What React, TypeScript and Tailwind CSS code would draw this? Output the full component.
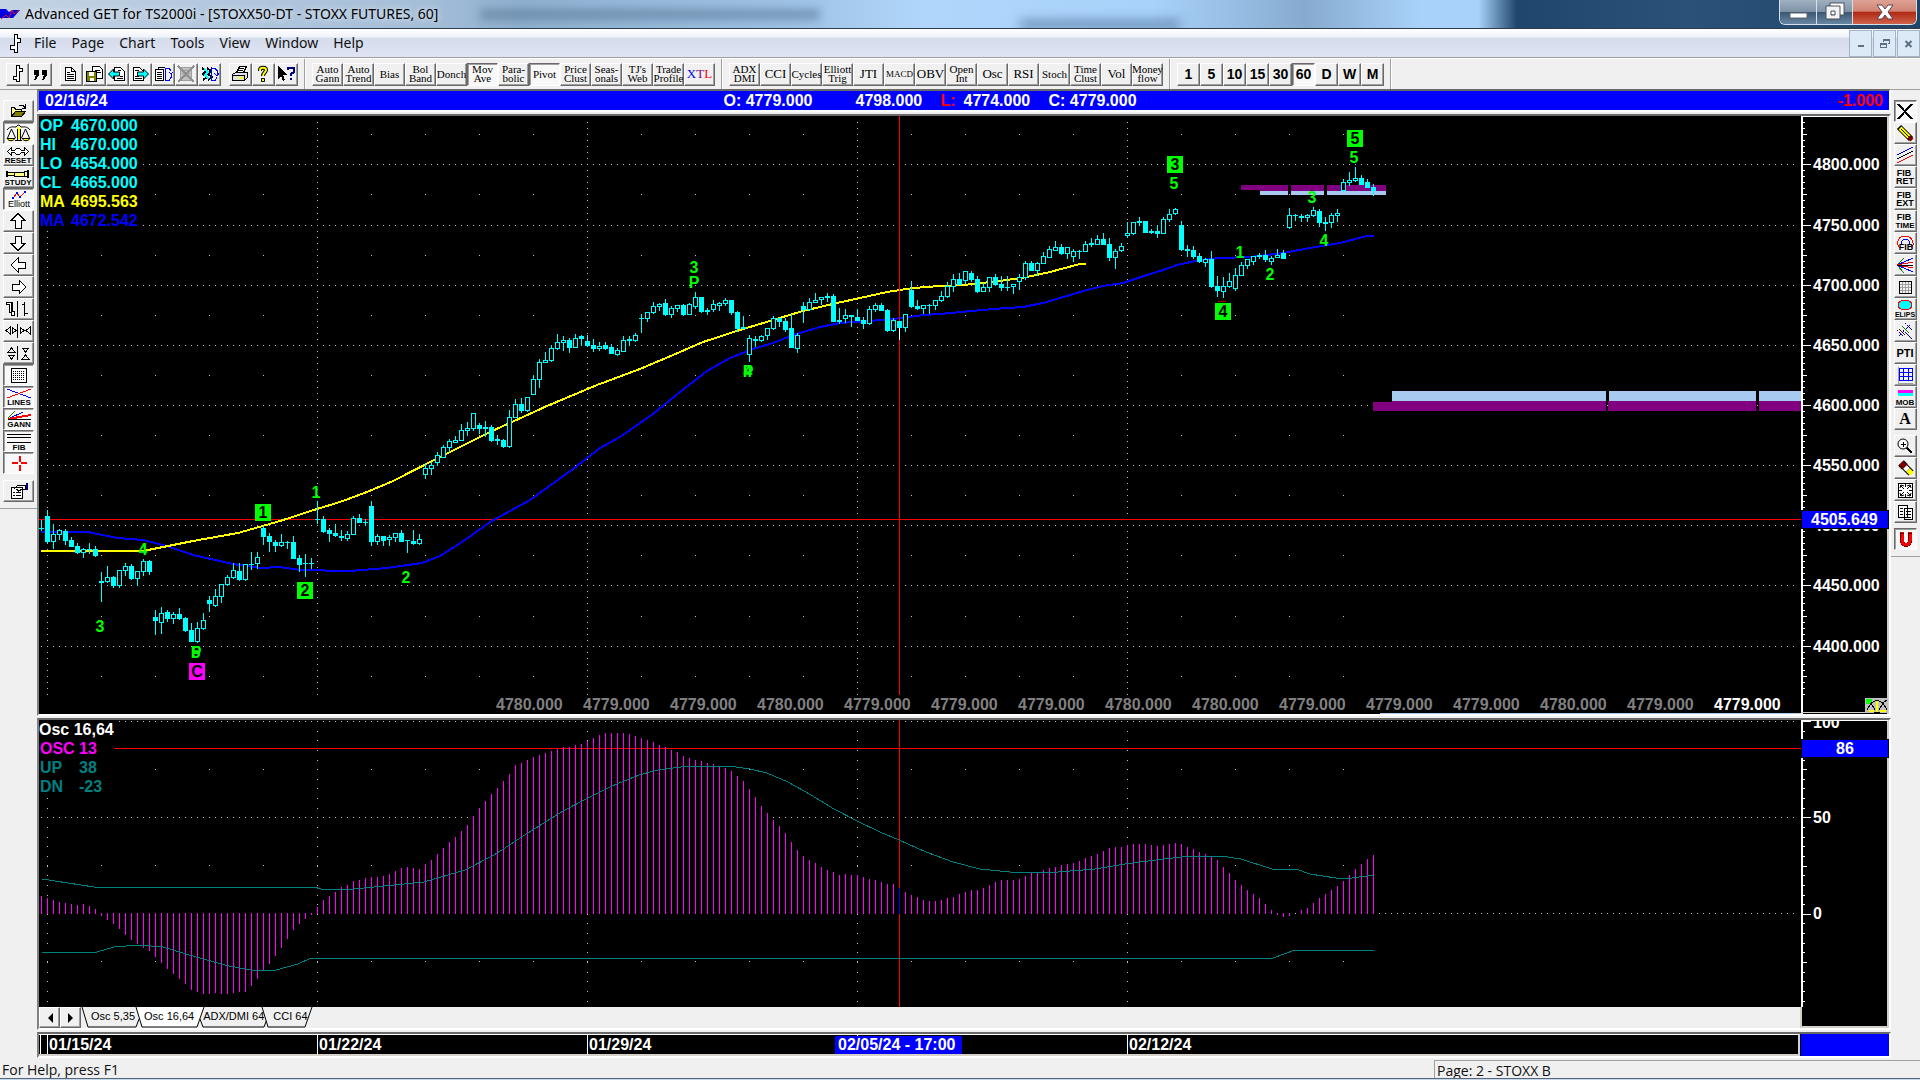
import React from "react";
import clsx from "clsx";

// [high, open, close, low] as y positions on the price pane, one entry per bar
const candles: number[][] = [
  [520,528,528,531],[510,516,542,544],[524,542,534,549],[529,535,530,540],[529,531,541,545],
  [537,540,547,547],[543,546,553,554],[548,553,549,558],[543,549,549,554],[546,549,556,557],
  [572,581,583,602],[566,582,577,583],[576,577,586,588],[570,586,570,588],[563,571,566,576],
  [564,566,579,580],[571,579,571,586],[559,572,561,576],[560,561,572,575],[610,617,621,635],
  [607,623,613,634],[610,612,619,622],[612,619,614,624],[608,614,619,620],[617,618,631,632],
  [623,630,642,642],[622,642,628,643],[613,629,620,630],[596,600,604,612],[589,606,596,607],
  [584,597,584,603],[575,585,577,586],[563,578,570,579],[563,571,580,581],[564,580,564,581],
  [552,564,564,570],[552,564,557,569],[526,528,537,545],[533,536,542,552],[540,542,546,552],
  [534,546,542,547],[541,542,542,549],[536,542,559,559],[555,558,565,572],[554,563,563,577],
  [558,563,563,569],[501,519,519,524],[516,519,532,533],[528,530,534,542],[524,533,536,537],
  [530,536,538,541],[531,539,534,541],[516,535,518,535],[514,518,523,523],[519,522,522,526],
  [501,506,542,546],[534,542,536,545],[536,536,541,546],[535,540,537,546],[533,538,533,542],
  [530,533,542,542],[540,540,541,553],[530,541,544,545],[534,544,539,545],[463,475,468,479],
  [462,469,465,475],[452,463,455,466],[445,458,447,458],[439,448,441,452],[436,443,440,443],
  [424,441,430,441],[422,431,428,436],[413,429,413,431],[423,425,429,434],[421,427,429,437],
  [425,427,441,442],[435,439,441,445],[439,440,447,448],[410,447,417,448],[399,418,404,418],
  [398,404,411,413],[397,411,397,412],[375,395,379,395],[359,380,362,388],[352,363,360,363],
  [345,361,348,362],[334,349,342,350],[336,343,340,351],[338,340,348,353],[334,348,338,348],
  [335,336,339,346],[335,341,346,347],[339,345,349,352],[342,349,346,351],[342,345,349,350],
  [344,347,354,354],[348,355,350,356],[336,352,340,352],[336,339,341,346],[333,341,335,342],
  [314,318,318,333],[312,319,312,322],[302,313,306,314],[303,307,304,311],[299,303,315,316],
  [306,315,308,318],[305,309,305,312],[304,305,315,316],[303,315,304,315],[292,307,297,309],
  [297,297,312,313],[308,310,312,315],[300,310,304,312],[302,306,303,311],[298,304,300,306],
  [300,300,313,315],[311,312,329,332],[316,327,329,329],[335,355,338,362],[336,339,341,347],
  [335,341,336,342],[328,336,328,340],[316,329,318,330],[318,318,322,327],[318,321,330,332],
  [314,328,348,348],[333,349,335,353],[302,306,310,323],[298,310,302,311],[293,303,300,303],
  [297,300,297,305],[293,296,298,302],[294,296,322,322],[308,320,322,324],[309,319,315,323],
  [315,315,317,327],[309,317,321,321],[317,320,324,329],[306,324,309,325],[303,310,305,312],
  [303,305,311,311],[309,310,331,332],[318,331,320,332],[321,321,328,340],[314,328,314,332],
  [281,290,307,308],[300,306,309,310],[305,309,305,314],[304,305,305,314],[300,306,300,310],
  [291,301,296,302],[282,297,286,298],[274,287,279,292],[273,279,285,285],[271,281,271,284],
  [271,273,280,282],[276,279,292,293],[283,292,287,292],[277,288,277,292],[274,277,285,286],
  [276,284,288,291],[276,287,287,291],[284,287,284,294],[274,282,277,290],[261,278,263,280],
  [261,263,271,271],[262,271,263,276],[252,264,256,264],[246,258,249,258],[241,251,247,251],
  [244,247,254,255],[247,254,247,259],[249,257,251,262],[250,251,251,259],[241,252,244,252],
  [238,243,245,247],[235,245,239,245],[233,239,245,245],[238,244,258,261],[249,258,251,269],
  [243,251,246,252],[222,236,233,238],[222,234,222,235],[217,221,223,226],[221,221,233,233],
  [229,231,233,234],[225,231,234,238],[217,234,219,234],[209,220,214,222],[208,214,209,215],
  [221,225,250,251],[245,249,251,257],[246,250,257,259],[253,256,262,263],[258,263,259,267],
  [251,259,287,288],[276,286,291,297],[277,292,286,298],[273,287,281,288],[268,289,275,291],
  [262,276,265,276],[259,266,259,269],[256,262,256,265],[253,255,257,259],[250,255,260,262],
  [256,262,258,265],[249,258,255,258],[250,253,259,259],[208,228,215,229],[214,215,215,221],
  [214,216,218,222],[214,218,215,222],[207,216,210,217],[209,211,223,227],[217,222,224,231],
  [213,223,215,228],[209,216,213,222],[179,191,182,192],[172,183,180,186],[167,181,178,182],
  [175,178,185,185],[179,182,188,188],[184,187,191,196],
];

const oscillator: number[] = [
  896,898,900,902,903,904,905,904,906,909,916,920,924,929,935,940,944,948,951,957,963,969,974,979,984,
  990,992,994,994,993,994,994,993,992,992,986,979,970,964,956,948,939,930,924,919,915,907,900,896,892,
  887,885,881,880,878,877,877,876,874,871,868,867,868,869,864,860,854,848,842,837,831,825,816,808,801,
  794,788,781,774,765,763,760,757,755,753,751,749,747,747,745,744,741,738,735,733,733,733,733,734,736,
  738,740,742,745,747,750,752,756,758,760,761,763,764,766,768,771,776,781,789,797,806,813,820,826,833,
  842,850,856,860,863,867,870,872,875,874,875,875,877,879,880,882,884,884,888,892,895,897,900,901,901,
  900,898,897,894,892,890,890,888,885,882,880,880,880,879,876,873,872,870,868,867,865,864,863,861,858,
  856,854,851,848,847,847,845,844,844,844,845,846,845,844,843,844,847,849,852,854,856,860,867,873,880,
  885,890,894,898,904,910,915,917,916,914,910,908,903,898,894,890,886,881,875,869,864,859,855,
];

const maYellow =
  "41,551 143,551 168,546 193,541 238,533 280,521 317,509 340,502 367,492 393,481 440,457 490,432 547,406 597,385 640,369 673,355 703,342 740,330 773,320 803,311 837,303 860,298 887,292 913,288 940,286 963,285 1000,281 1027,277 1050,272 1080,264 1086,264";
const maBlue =
  "41,532 88,532 117,538 143,540 167,546 193,555 233,564 260,568 280,567 300,570 350,571 387,568 422,563 440,556 465,540 490,522 530,500 573,469 600,448 620,437 653,414 680,392 707,371 730,358 753,349 773,343 793,335 820,327 840,323 870,321 903,318 923,315 940,314 993,309 1023,307 1043,303 1060,298 1087,290 1103,286 1123,283 1147,275 1163,270 1177,265 1200,260 1220,258 1250,257 1283,253 1310,248 1340,243 1367,236 1374,236";
const bandUp =
  "42,879 94,887 314,887 321,889 354,889 384,886 424,882 465,870 494,855 531,831 563,811 588,798 612,786 639,775 658,770 681,767 698,766 729,766 750,769 767,773 788,782 811,795 834,809 857,821 880,832 899,840 926,852 953,862 980,869 1010,872 1058,872 1095,869 1125,864 1156,860 1190,856 1221,856 1241,859 1272,869 1296,869 1310,874 1336,878 1352,878 1374,875";
const bandDown =
  "42,952 97,952 114,947 139,945 163,947 196,957 229,966 257,971 276,970 298,964 311,958 1273,958 1295,950 1374,950";

const legend = [
  ["OP", "4670.000", "#00ffff"],
  ["HI", "4670.000", "#00ffff"],
  ["LO", "4654.000", "#00ffff"],
  ["CL", "4665.000", "#00ffff"],
  ["MA", "4695.563", "#ffff00"],
  ["MA", "4672.542", "#0000ff"],
];

const closes = [4780, 4779, 4779, 4780, 4779, 4779, 4779, 4780, 4780, 4779, 4779, 4779, 4780, 4779, 4779];

const waves: [string, number, number][] = [
  ["3", 100, 632], ["4", 143, 555], ["1", 316, 498], ["2", 406, 583], ["P", 196, 658], ["5", 196, 658],
  ["3", 694, 273], ["P", 694, 288], ["P", 748, 377], ["4", 748, 377], ["1", 1240, 258], ["2", 1270, 280],
  ["3", 1312, 203], ["4", 1324, 246], ["5", 1174, 189], ["5", 1354, 163],
];

const boxedWaves: [string, number, number, string][] = [
  ["1", 255, 504, "#00ff00"],
  ["2", 297, 582, "#00ff00"],
  ["C", 189, 663, "#ff00ff"],
  ["4", 1215, 303, "#00ff00"],
  ["3", 1167, 156, "#00ff00"],
  ["5", 1347, 130, "#00ff00"],
];

const weeks = [47, 317, 587, 857, 1127];
const barX = (i: number) => 41 + i * 6;
const priceY = (step: number) => Math.round(164.4 + step * 6.015);
const oscY = (step: number) => Math.round(721 + step * 9.64);
const range = (from: number, to: number) => Array.from({ length: to - from + 1 }, (_, i) => from + i);
const dots = (xs: number[], ys: number[]) => xs.map((x) => ys.map((y) => `M${x} ${y}h1v1h-1z`).join("")).join("");

const gridX = range(0, 292).map(barX);
const midX = range(0, 24).map((k) => 47 + k * 54);
const priceDots =
  dots(gridX, range(0, 8).map((k) => priceY(k * 10))) +
  dots(weeks, range(-7, 88).map(priceY)) +
  dots(midX, range(-1, 8).map((k) => priceY(k * 10 + 5)));
const oscDots =
  dots(gridX, [721, 817, 913]) + dots(weeks, range(1, 29).map(oscY)) + dots(midX, [769, 865, 961]);

const tickEnd = (step: number) => (step % 10 === 0 ? 9 : step % 5 === 0 ? 5 : 3);

const chartText = "[font-family:'Liberation_Sans',Arial,sans-serif] text-[16px] font-bold";

const PriceChart = () => (
  <svg viewBox="39 116 1850 598" className={clsx("block w-full bg-black", chartText)} shapeRendering="crispEdges">
    <path d={priceDots} fill="#c0c0c0" />
    <rect x="39" y="116" width="102" height="113" fill="#000" />
    <g fill="#800080">
      <path d="M1241 185h47v6h-28v-1h-19z" />
      <rect x="1291" y="185" width="33" height="6" />
      <rect x="1327" y="185" width="59" height="6" />
      <path d="M1373 402h19v-1h214v10h-233z" />
      <rect x="1608" y="401" width="148" height="10" />
      <rect x="1759" y="401" width="42" height="10" />
    </g>
    <g fill="#a6caf0">
      <rect x="1260" y="191" width="28" height="4" />
      <rect x="1291" y="191" width="33" height="4" />
      <rect x="1327" y="191" width="59" height="4" />
      <rect x="1392" y="391" width="214" height="10" />
      <rect x="1609" y="391" width="147" height="10" />
      <rect x="1759" y="391" width="42" height="10" />
      <rect x="1380" y="713" width="421" height="1" />
    </g>
    <rect x="39" y="519" width="1762" height="1" fill="#f00" />
    <rect x="1218" y="301" width="8" height="1" fill="#a00000" />
    <polyline points={maBlue} fill="none" stroke="#0000ff" strokeWidth="2" />
    <polyline points={maYellow} fill="none" stroke="#ffff00" strokeWidth="2" />
    <rect x="899" y="116" width="1" height="579" fill="#f00" />
    {candles.map(([high, open, close, low], i) => {
      const x = barX(i);
      const top = Math.min(open, close);
      const size = Math.abs(close - open);
      return (
        <g key={i} fill="#00ffff">
          <rect x={x} y={high} width="1" height={Math.max(low - high, 1)} fill={i === 143 ? "#fff" : "#00ffff"} />
          {close >= open ? (
            <rect x={x - 2} y={top} width="5" height={Math.max(size, 1)} />
          ) : (
            <rect x={x - 1.5} y={top + 0.5} width="4" height={Math.max(size - 1, 1)} fill="#000" stroke="#00ffff" />
          )}
        </g>
      );
    })}
    {waves.map(([name, x, y], i) => (
      <text key={i} x={x} y={y} textAnchor="middle" fill="#00ff00">
        {name}
      </text>
    ))}
    {boxedWaves.map(([name, x, y, color]) => (
      <g key={name + x}>
        <rect x={x} y={y} width="16" height="17" fill={color} />
        <text x={x + 8} y={y + 14} textAnchor="middle">
          {name}
        </text>
      </g>
    ))}
    {legend.map(([name, value, color], i) => (
      <g key={i} fill={color}>
        <text x="40" y={131 + i * 19}>{name}</text>
        <text x="71" y={131 + i * 19}>{value}</text>
      </g>
    ))}
    {closes.map((value, i) => (
      <text key={i} x={496 + i * 87} y="710" fill={i === closes.length - 1 ? "#fff" : "#808080"}>
        {value}.000
      </text>
    ))}
    <g fill="#fff">
      <rect x="1801" y="116" width="2" height="598" />
      <rect x="1801" y="116" width="87" height="1" />
      <rect x="1801" y="712" width="87" height="1" fill="#d4d0c8" />
      <rect x="1887" y="116" width="2" height="598" fill="#d4d0c8" />
      {range(-7, 88).map((k) => (
        <rect key={k} x="1802" y={priceY(k)} width={tickEnd(k)} height="1" />
      ))}
      {range(0, 8).map((k) => (
        <text key={k} x="1813" y={priceY(k * 10) + 6}>
          {4800 - k * 50}.000
        </text>
      ))}
    </g>
    <rect x="1801" y="510" width="88" height="19" fill="#000" />
    <rect x="1802" y="511" width="86" height="17" fill="#00f" />
    <text x="1811" y="525" fill="#fff">4505.649</text>
    <g transform="translate(1865 698)">
      <rect width="23" height="15" fill="#c0c0c0" />
      <rect x="1" y="1" width="6" height="5" fill="#0f0" />
      <path d="M11 3h2v11h-2z M4 12h5v2h-5z M15 12h6v2h-6z" fill="#ff0" />
      <path d="M2 12l4-7 4 7M14 12l4-7 4 7M6 5l6-3 6 3M18 5l4-3M9 14h6" fill="none" stroke="#000" />
    </g>
  </svg>
);

const OscChart = () => (
  <svg viewBox="39 720 1850 287" className={clsx("block w-full bg-black", chartText)} shapeRendering="crispEdges">
    <path d={oscDots} fill="#c0c0c0" />
    <rect x="39" y="720" width="76" height="76" fill="#000" />
    <rect x="114" y="748" width="1687" height="1" fill="#f00" />
    <rect x="899" y="720" width="1" height="287" fill="#f00" />
    {oscillator.map((y, i) => (
      <rect
        key={i}
        x={barX(i)}
        y={Math.min(y, 913)}
        width="1"
        height={y > 914 ? y - 913 : 914 - y}
        fill={i === 143 ? "#00f" : "#f0f"}
      />
    ))}
    <g fill="none" stroke="#008080">
      <polyline points={bandUp} />
      <polyline points={bandDown} />
    </g>
    <text x="39" y="735" fill="#fff">Osc 16,64</text>
    <text x="40" y="754" fill="#f0f">OSC</text>
    <text x="79" y="754" fill="#f0f">13</text>
    <text x="40" y="773" fill="#008080">UP</text>
    <text x="79" y="773" fill="#008080">38</text>
    <text x="40" y="792" fill="#008080">DN</text>
    <text x="79" y="792" fill="#008080">-23</text>
    <g fill="#fff">
      <rect x="1801" y="720" width="2" height="287" />
      <rect x="1887" y="720" width="2" height="287" fill="#d4d0c8" />
      {range(0, 29).map((k) => (
        <rect key={k} x="1802" y={oscY(k)} width={tickEnd(k)} height="1" />
      ))}
      <text x="1813" y="728">100</text>
      <rect x="1801" y="720" width="87" height="1" />
      <text x="1813" y="823">50</text>
      <text x="1813" y="919">0</text>
    </g>
    <rect x="1801" y="739" width="88" height="19" fill="#000" />
    <rect x="1802" y="740" width="86" height="17" fill="#00f" />
    <text x="1845" y="754" textAnchor="middle" fill="#fff">86</text>
  </svg>
);

const TimeAxis = () => (
  <svg viewBox="39 1034 1850 22" className={clsx("block w-full bg-black", chartText)} shapeRendering="crispEdges">
    <g fill="#fff">
      <rect x="39" y="1034" width="1761" height="1" />
      <rect x="39" y="1054" width="1761" height="2" fill="#d4d0c8" />
      <rect x="40" y="1034" width="1" height="20" />
      <rect x="1798" y="1034" width="2" height="20" fill="#d4d0c8" />
      {weeks.map((x) => (
        <rect key={x} x={x} y="1035" width="1" height="19" />
      ))}
      <text x="49" y="1050">01/15/24</text>
      <text x="319" y="1050">01/22/24</text>
      <text x="589" y="1050">01/29/24</text>
      <rect x="835" y="1036" width="127" height="18" fill="#00f" />
      <text x="838" y="1050">02/05/24 - 17:00</text>
      <text x="1129" y="1050">02/12/24</text>
    </g>
    <rect x="1801" y="1034" width="88" height="22" fill="#00f" />
  </svg>
);

type ToolProps = {
  label: string;
  pressed?: boolean;
  className?: string;
  children: React.ReactNode;
};

const Tool = ({ label, pressed, className, children }: ToolProps) => (
  <button
    type="button"
    aria-label={label}
    aria-pressed={pressed}
    className={clsx(
      "flex shrink-0 items-center justify-center border text-black",
      pressed
        ? "border-t-[#696969] border-l-[#696969] border-r-white border-b-white bg-[#f8f8f8] shadow-[inset_1px_1px_0_#a0a0a0]"
        : "border-t-white border-l-white border-r-[#696969] border-b-[#696969] bg-[#f0f0f0] shadow-[inset_-1px_-1px_0_#a0a0a0]",
      className
    )}
  >
    {children}
  </button>
);

const iconFont = "[font-family:'Liberation_Sans',Arial,sans-serif] text-[8px]";

const Art = ({ w, h, children }: { w: number; h: number; children: React.ReactNode }) => (
  <svg width={w} height={h} viewBox={`0 0 ${w} ${h}`} className={iconFont} fill="none" stroke="#000" shapeRendering="crispEdges">
    {children}
  </svg>
);

const Caption = ({ x, y, large, children }: { x: number; y: number; large?: boolean; children: string }) => (
  <text x={x} y={y} textAnchor="middle" fill="#000" stroke="none" className={large ? "text-[9px] font-bold" : "text-[8px] font-bold"}>
    {children}
  </text>
);

const page = "M4.5 3.5h6l4 4v9h-10zM10.5 3.5v4h4";
const pageLines = "M6 8.5h3M6 10.5h7M6 12.5h7M6 14.5h7";

const barGlyph = "M9.5 1.5h3v3h3v3h-3v10h-3v-2h-3v-3h3z";

const fileTools = [
  { name: "Chart", art: <path d={barGlyph} fill="#fff" /> },
  {
    name: "Quote",
    art: <path d="M4 6h5v5l-3 5H4l2-5H4zM12 6h5v5l-3 5h-2l2-5h-2z" fill="#000" stroke="none" />,
  },
];

const pageTools = [
  { name: "New page", art: <><path d={page} fill="#fff" /><path d={pageLines} /></> },
  {
    name: "Save pages",
    art: (
      <>
        <path d="M8.5 2.5h7l3 3v9h-10z" fill="#fff" />
        <path d="M11 6.5h5M12 8.5h5" />
        <path d="M2.5 7.5h10v10h-10z" fill="#808000" />
        <path d="M5 8h5v4H5zM6 14h4v3H6z" fill="#fff" stroke="none" />
      </>
    ),
  },
  {
    name: "Previous page",
    art: (
      <>
        <path d="M7.5 3.5h6l4 4v9h-10z" fill="#fff" />
        <path d="M11 6.5h3M13 12.5h3M10 14.5h6" />
        <path d="M1.5 10l5-5v3h6v4h-6v3z" fill="#0ff" shapeRendering="auto" />
      </>
    ),
  },
  {
    name: "Next page",
    art: (
      <>
        <path d="M3.5 3.5h6l4 4v9h-10z" fill="#fff" />
        <path d="M5 6.5h4M5 12.5h4M5 14.5h7" />
        <path d="M18.5 10l-5-5v3h-6v4h6v3z" fill="#0ff" shapeRendering="auto" />
      </>
    ),
  },
  {
    name: "Page loop",
    art: (
      <>
        <path d="M2.5 5.5h8v11h-8zM5.5 5V3.5h6" fill="#fff" />
        <path d="M4 8.5h5M4 10.5h5M4 12.5h5M4 14.5h5" />
        <path d="M12.5 4v13M12 4.5h4l2 2M12 16.5h4l2-3v-5M16 8l2 2 2-2" stroke="#00f" />
      </>
    ),
  },
  {
    name: "Delete page",
    art: (
      <>
        <path d="M4.5 3.5h11v13h-11z" fill="#c0c0c0" stroke="#a0a0a0" />
        <path d="M6 6.5h8M6 9.5h8M6 12.5h8" stroke="#a0a0a0" />
        <path d="M2 2l16 16M18 2L2 18" stroke="#909090" strokeWidth="2" />
      </>
    ),
  },
  {
    name: "Chart loop",
    art: (
      <>
        <path d="M3 4l4 3-3 3 4 3-4 3M8 4l4 3-3 3 4 3-4 3" strokeWidth="2" />
        <path d="M5 5l4 3-3 3 4 4" stroke="#0ff" strokeWidth="2" />
        <path d="M12.5 3v14M12 4.5h4l2 2v3M12 16.5h4l2-3M15 9l3 3 2-3" stroke="#00f" />
      </>
    ),
  },
];

const helpTools = [
  {
    name: "Print",
    art: (
      <>
        <path d="M6.5 8.5l3-6h7l-3 6z" fill="#fff" />
        <path d="M2.5 10.5l3-2h12v5l-3 3h-12z" fill="#e0e0e0" />
        <path d="M3 11.5h11M14.5 11v5M9 4.5h5M8 6.5h5" />
        <path d="M9 14h4" stroke="#ff0" strokeWidth="2" />
      </>
    ),
  },
  {
    name: "Help",
    art: (
      <g shapeRendering="auto">
        <path d="M7 7V6c0-3 6-3 6 0 0 2-3 3-3 6" strokeWidth="4" />
        <path d="M7 7V6c0-3 6-3 6 0 0 2-3 3-3 6" stroke="#ff0" strokeWidth="2" />
        <path d="M8.5 14.5h3v3h-3z" fill="#ff0" />
      </g>
    ),
  },
  {
    name: "Context help",
    art: (
      <>
        <path d="M2 2v13l3-3 2 5 2-1-2-5h4z" fill="#000" stroke="none" />
        <path d="M12 6V4h6v4l-3 2v2M14 15h2" stroke="#000080" strokeWidth="2" />
      </>
    ),
  },
];

const studyTools = [
  ["Auto", "Gann"], ["Auto", "Trend"], ["Bias"], ["Bol", "Band"], ["Donch"], ["Mov", "Ave"], ["Para-", "bolic"],
  ["Pivot"], ["Price", "Clust"], ["Seas-", "onals"], ["TJ's", "Web"], ["Trade", "Profile"], ["XTL"],
];
const indicatorTools = [
  ["ADX", "DMI"], ["CCI"], ["Cycles"], ["Elliott", "Trig"], ["JTI"], ["MACD"], ["OBV"], ["Open", "Int"],
  ["Osc"], ["RSI"], ["Stoch"], ["Time", "Clust"], ["Vol"], ["Money", "flow"],
];
const intervals = ["1", "5", "10", "15", "30", "60", "D", "W", "M"];

const wordSize = (words: string[]) => {
  if (words.length > 1) return "text-[11px] leading-[9px]";
  if (words[0].length <= 3) return "text-[13px] leading-[14px]";
  return words[0] === "MACD" ? "text-[9px] leading-[12px]" : "text-[11px] leading-[12px]";
};

const WordTool = ({ words, pressed }: { words: string[]; pressed?: boolean }) => (
  <Tool label={words.join(" ")} pressed={pressed} className="h-[23px] w-[31px]">
    <span className={clsx("flex flex-col items-center [font-family:'Liberation_Serif',serif]", wordSize(words))}>
      {words[0] === "XTL" ? (
        <span>
          <span className="text-[#00f]">X</span>
          <span className="text-[#800080]">T</span>
          <span className="text-[#f00]">L</span>
        </span>
      ) : (
        words.map((word) => <span key={word}>{word}</span>)
      )}
    </span>
  </Tool>
);

const Divider = () => <div className="h-[30px] w-[2px] shrink-0 border-l border-[#a0a0a0] bg-white" />;

const Group = ({ children }: { children: React.ReactNode }) => <div className="flex shrink-0">{children}</div>;

const ArtGroup = ({ tools }: { tools: { name: string; art: React.ReactNode }[] }) => (
  <Group>
    {tools.map(({ name, art }) => (
      <Tool key={name} label={name} className="size-[23px]">
        <Art w={21} h={20}>{art}</Art>
      </Tool>
    ))}
  </Group>
);

const TopToolbar = () => (
  <div className="flex h-[31px] items-center border-t border-white pl-[6px]">
    <ArtGroup tools={fileTools} />
    <div className="w-2" />
    <ArtGroup tools={pageTools} />
    <div className="w-2" />
    <ArtGroup tools={helpTools} />
    <div className="w-[6px]" />
    <Divider />
    <div className="w-[6px]" />
    <Group>
      {studyTools.map((words) => (
        <WordTool key={words.join()} words={words} pressed={words[0] === "Mov" || words[0] === "Pivot"} />
      ))}
    </Group>
    <div className="w-[6px]" />
    <Divider />
    <div className="w-[6px]" />
    <Group>
      {indicatorTools.map((words) => (
        <WordTool key={words.join()} words={words} />
      ))}
    </Group>
    <div className="w-[6px]" />
    <Divider />
    <div className="w-[6px]" />
    <Group>
      {intervals.map((name) => (
        <Tool key={name} label={name} pressed={name === "60"} className="size-[23px]">
          <span className="[font-family:'Liberation_Sans',Arial,sans-serif] text-[14px] font-bold">{name}</span>
        </Tool>
      ))}
    </Group>
    <div className="w-[6px]" />
    <Divider />
  </div>
);

const leftTools = [
  {
    name: "Open",
    art: (
      <>
        <path d="M7.5 15.5v-9h3l1 2h6v3" fill="#ff8" />
        <path d="M7.5 15.5l4-5h10l-4 5z" fill="#808000" />
        <path d="M15 4.5h4l2 2M21.5 3v4h-4" />
      </>
    ),
  },
  {
    name: "Scales",
    pressed: true,
    art: (
      <>
        <path d="M14.5 4v12M4 16h5M20 16h5" stroke="#ff0" strokeWidth="3" />
        <path d="M3.5 15l4-9 4 9M17.5 15l4-9 4 9M3 15.5c2 3 6 3 8 0zM18 15.5c2 3 6 3 8 0zM3 7c3-4 6-3 9-3l2-2h1l2 2c3 0 6-1 9 3M11 17.5h7" shapeRendering="auto" />
        <path d="M13.5 6v11M16.5 6v11" />
      </>
    ),
  },
  {
    name: "Reset",
    art: (
      <>
        <path d="M3.5 6.5l4-4v3h3l2-2h3l2 2h3v-3l4 4-4 4v-3h-3l-2 2h-3l-2-2h-3v3z" fill="#fff" />
        <Caption x={14} y={18}>RESET</Caption>
      </>
    ),
  },
  {
    name: "Study",
    art: (
      <>
        <path d="M3.5 5.5h7v3h-7zM10.5 5.5h10v4h-10zM20.5 4.5h4v5h-4z" fill="#ff8" />
        <path d="M3 4v6M24 3v8" strokeWidth="2" />
        <Caption x={14} y={18}>STUDY</Caption>
      </>
    ),
  },
  {
    name: "Elliott",
    pressed: true,
    art: (
      <>
        <path d="M9 9l4-5 3 4 5-5" stroke="#f00" />
        <path d="M8 8h2v2H8zM12 3h2v2h-2zM15 7h2v2h-2zM20 2h2v2h-2z" fill="#00f" stroke="none" />
        <text x="15" y="18" textAnchor="middle" fill="#000" stroke="none" className="text-[9px]">Elliott</text>
      </>
    ),
  },
  { name: "Up", art: <path d="M14 2.5l7 7h-4v8h-6v-8H7z" fill="#fff" /> },
  { name: "Down", art: <path d="M14 17.5l7-7h-4v-7h-6v7H7z" fill="#fff" /> },
  { name: "Left", art: <path d="M7 10l7-7v4h7v6h-7v4z" fill="#fff" /> },
  { name: "Right", art: <path d="M22 10l-7-7v4H8v6h7v4z" fill="#fff" /> },
  {
    name: "Bar width",
    art: (
      <>
        <path d="M2.5 3.5h5v9h3v4h-3v-3h-2v-8h-3z" fill="#fff" />
        <path d="M13.5 2v16M18 5.5h3M20.5 3v14M21 14.5h3" />
        <path d="M8.5 3v10" />
      </>
    ),
  },
  {
    name: "Horizontal zoom",
    art: <path d="M6 6v7l-4-3.5zM8 6v7l4-3.5zM13.5 3v14M16 6v7l4-3.5zM26 6v7l-4-3.5z" />,
  },
  {
    name: "Vertical zoom",
    art: <path d="M4 9h7L7.5 5zM4 12h7l-3.5 4zM13.5 3v14M18 5h7l-3.5 4zM18 16h7l-3.5-4z" />,
  },
  {
    name: "Grid",
    pressed: true,
    art: (
      <>
        <path d="M7.5 3.5h15v14h-15z" fill="#fff" />
        <path d="M9 6.5h12M9 8.5h12M9 10.5h12M9 12.5h12M9 14.5h12" strokeDasharray="1 1" />
      </>
    ),
  },
  {
    name: "Lines",
    pressed: true,
    art: (
      <>
        <path d="M3 2l24 9" stroke="#00f" />
        <path d="M3 11l24-9" stroke="#f00" />
        <Caption x={15} y={18}>LINES</Caption>
      </>
    ),
  },
  {
    name: "Gann",
    pressed: true,
    art: (
      <>
        <path d="M4 9l7-7" stroke="#080" />
        <path d="M4 10l15-7" stroke="#00f" />
        <path d="M4 10l23-4" stroke="#f00" strokeWidth="2" />
        <path d="M4 10.5h23" />
        <Caption x={15} y={18}>GANN</Caption>
      </>
    ),
  },
  {
    name: "Fib",
    pressed: true,
    art: (
      <>
        <path d="M3 3.5h24M3 6.5h24M3 11.5h24" />
        <Caption x={15} y={19}>FIB</Caption>
      </>
    ),
  },
  { name: "Crosshair", pressed: true, art: <path d="M8 10h6M17 10h6M15.5 3v6M15.5 12v6" stroke="#f00" strokeWidth="2" /> },
];

const rightTools = [
  { name: "Pointer", pressed: true, art: <path d="M3 3l14 15M17 3L3 18" strokeWidth="2" /> },
  {
    name: "Pencil",
    art: (
      <g shapeRendering="auto">
        <path d="M4 4l12 12" strokeWidth="6" />
        <path d="M5 5l9 9" stroke="#ff0" strokeWidth="4" />
        <path d="M6 6l8 8" />
        <path d="M14 14l3 3" stroke="#800000" strokeWidth="4" />
      </g>
    ),
  },
  {
    name: "Channel",
    art: (
      <>
        <path d="M2 10L18 2" stroke="#00f" />
        <path d="M2 14l16-8" />
        <path d="M2 18l16-8" stroke="#f00" />
      </>
    ),
  },
  { name: "Fib retracement", art: <><Caption x={9} y={9} large>FIB</Caption><Caption x={10} y={17} large>RET</Caption></> },
  { name: "Fib extension", art: <><Caption x={9} y={9} large>FIB</Caption><Caption x={10} y={17} large>EXT</Caption></> },
  { name: "Fib time", art: <><Caption x={9} y={9} large>FIB</Caption><Caption x={10} y={17}>TIME</Caption></> },
  {
    name: "Fib arc",
    art: (
      <>
        <path d="M5 15C1 12 2 3 10 3s10 9 6 12" stroke="#f00" />
        <path d="M6 11c0-6 9-6 9 0" stroke="#00f" />
        <Caption x={11} y={17} large>FIB</Caption>
      </>
    ),
  },
  {
    name: "Gann fan",
    art: (
      <>
        <path d="M2 10l7-7M2 10l7 8" stroke="#080" />
        <path d="M2 10l16-7M2 10l16 7" stroke="#00f" />
        <path d="M2 10l16-3M2 10l16 3" stroke="#f00" />
        <path d="M2 10.5h16" />
      </>
    ),
  },
  {
    name: "Gann box",
    art: (
      <>
        <path d="M7.5 4v12M10.5 4v12M13.5 4v12M4 7.5h12M4 10.5h12M4 13.5h12" stroke="#a0a0a0" />
        <path d="M4.5 4.5h12v12h-12z" />
      </>
    ),
  },
  {
    name: "Ellipse",
    art: (
      <>
        <ellipse cx="10" cy="6" rx="7" ry="5" fill="#0ff" stroke="#f00" />
        <text x="10" y="18" textAnchor="middle" fill="#000" stroke="none" className="text-[7px] font-bold">ELiPS</text>
      </>
    ),
  },
  {
    name: "Pitchfork",
    art: (
      <>
        <path d="M10 2l7 7M2 9l6 6M8 9l9 9" stroke="#000080" strokeDasharray="2 1" />
        <path d="M7 5l7 7" stroke="#080" />
        <path d="M4 8l6 6" stroke="#800000" />
        <path d="M4 15L15 4" stroke="#00a" strokeDasharray="1 1" />
      </>
    ),
  },
  {
    name: "PTI",
    art: <text x="10" y="14" textAnchor="middle" fill="#000" stroke="none" className="text-[11px] font-bold">PTI</text>,
  },
  {
    name: "Grid",
    art: (
      <>
        <path d="M4.5 3.5h13v12h-13zM8.5 3v13M13.5 3v13M4 7.5h14M4 11.5h14" stroke="#00f" />
        <path d="M3.5 2v16h14" stroke="#a0a0a0" />
      </>
    ),
  },
  {
    name: "MOB",
    art: (
      <>
        <path d="M3 4.5h15" stroke="#f0f" strokeWidth="3" />
        <path d="M3 7.5h15" stroke="#0ff" strokeWidth="3" />
        <Caption x={10} y={18}>MOB</Caption>
      </>
    ),
  },
  {
    name: "Text",
    art: (
      <text x="10" y="15" textAnchor="middle" fill="#000" stroke="none" className="[font-family:'Liberation_Serif',serif] text-[16px] font-bold">
        A
      </text>
    ),
  },
];

const viewTools = [
  {
    name: "Zoom",
    art: (
      <>
        <circle cx="8" cy="8" r="5" fill="#fff" shapeRendering="auto" />
        <path d="M8.5 6v5M6 8.5h5" />
        <path d="M12 12l5 5" strokeWidth="2" />
      </>
    ),
  },
  {
    name: "Erase",
    art: (
      <g shapeRendering="auto">
        <path d="M6 5l4 4" stroke="#000" strokeWidth="8" />
        <path d="M6 5l4 4" stroke="#800000" strokeWidth="6" />
        <path d="M10 9l6 6" stroke="#000" strokeWidth="7" />
        <path d="M10 9l3 3" stroke="#fff" strokeWidth="5" />
        <path d="M13 12l4 4" stroke="#ff0" strokeWidth="5" />
      </g>
    ),
  },
  {
    name: "Expand",
    art: (
      <>
        <path d="M3.5 3.5h14v14h-14z" fill="#fff" />
        <path d="M10.5 3v4M10.5 14v4M3 10.5h4M14 10.5h4" />
        <path d="M5 5l4 4M16 5l-4 4M5 16l4-4M16 16l-4-4M5 8l1-3 3 1M16 8l-1-3-3 1M5 13l1 3 3-1M16 13l-1 3-3-1" shapeRendering="auto" />
      </>
    ),
  },
  {
    name: "Copy",
    art: (
      <>
        <path d="M3.5 3.5h9v12h-9zM9.5 6.5h8v11h-8z" fill="#fff" />
        <path d="M5 7l3-1M5 10l3-1M5 13l3-1M11 10l5-1M11 13l5-1M11 16l5-1" />
      </>
    ),
  },
];

const LeftToolbar = () => (
  <aside className="w-[37px] shrink-0">
    <div className="flex flex-col border-t border-b border-[#a0a0a0] pt-[10px] pb-[6px] pl-[3px]">
      {leftTools.map(({ name, art, pressed }) => (
        <Tool key={name} label={name} pressed={pressed} className="h-[22px] w-[31px]">
          <Art w={29} h={20}>{art}</Art>
        </Tool>
      ))}
      <div className="h-[6px]" />
      <Tool label="Properties" className="h-[22px] w-[31px]">
        <Art w={29} h={20}>
          <path d="M7.5 6.5h11v11h-11z" fill="#fff" />
          <path d="M9 11.5h2M12 11.5h5M9 14.5h2M12 14.5h5M10 8l4-4h7v4h-3l-4 3M12 8l3 2" />
          <path d="M23 2v7" stroke="#000080" strokeWidth="2" />
        </Art>
      </Tool>
    </div>
  </aside>
);

const RightToolbar = () => (
  <aside className="w-[29px] shrink-0">
    <div className="flex flex-col border-t border-b border-[#a0a0a0] pt-[10px] pb-[6px] pl-[3px]">
      {rightTools.map(({ name, art, pressed }) => (
        <Tool key={name} label={name} pressed={pressed} className="h-[22px] w-[23px]">
          <Art w={21} h={20}>{art}</Art>
        </Tool>
      ))}
      <div className="h-[5px]" />
      {viewTools.map(({ name, art }) => (
        <Tool key={name} label={name} className="h-[22px] w-[23px]">
          <Art w={21} h={20}>{art}</Art>
        </Tool>
      ))}
      <div className="h-[5px]" />
      <Tool label="Magnet" pressed className="h-[22px] w-[23px]">
        <Art w={21} h={20}>
          <path d="M7 3v9c0 5 8 5 8 0V3" stroke="#600" strokeWidth="4" />
          <path d="M7 3v9c0 5 8 5 8 0V3" stroke="#f00" strokeWidth="3" />
          <path d="M5 4.5h4M13 4.5h4" stroke="#600" />
        </Art>
      </Tool>
    </div>
  </aside>
);

const TitleBar = () => (
  <header className="relative flex h-[29px] items-start overflow-hidden border-b border-[#2d3b4d] bg-[linear-gradient(90deg,#c3d3e4_0%,#b4c9df_10%,#a5bed8_22%,#8fb0d0_27%,#9fc4e6_42%,#b0d6fb_48%,#a9d2fa_60%,#86abcf_68%,#a9d2fa_74%,#a9d2fa_77%,#1f466c_79%,#2a5278_88%,#1f4468_100%)]">
    <div className="absolute top-[9px] left-[480px] h-[11px] w-[340px] bg-[#4f6d8c]/50 blur-[4px]" />
    <div className="absolute top-[20px] left-[1020px] h-[10px] w-[160px] bg-[#4f749b]/70 blur-[6px]" />
    <div className="relative flex flex-1 items-center gap-[5px]">
      <svg width="20" height="24" viewBox="0 0 20 24" className="mt-1">
        <path d="M0 5h6l3 3 4-2h7l-7 8H0z" fill="#0000e0" />
        <path d="M1 15l5-4 3 3 3-8 2 4 5-4" fill="none" stroke="#e01030" />
      </svg>
      <h1 className="[font-family:'Noto_Sans',sans-serif] text-[14px] leading-[28px] text-black [text-shadow:0_0_6px_#fff]">
        Advanced GET for TS2000i - [STOXX50-DT - STOXX FUTURES, 60]
      </h1>
    </div>
    <div className="relative mr-[3px] flex h-[25px] overflow-hidden rounded-b-md border border-t-0 border-[#d5e0ea]">
      <button type="button" aria-label="Minimize" className="flex w-[37px] items-center justify-center border-r border-[#d5e0ea] bg-[linear-gradient(#9fb0c0_0%,#7f93a8_48%,#3d5873_52%,#6886a3_100%)]">
        <svg width="20" height="20">
          <rect x="2" y="11" width="17" height="5" fill="#fff" stroke="#5a6470" />
        </svg>
      </button>
      <button type="button" aria-label="Restore" className="flex w-[36px] items-center justify-center border-r border-[#d5e0ea] bg-[linear-gradient(#9fb0c0_0%,#7f93a8_48%,#3d5873_52%,#6886a3_100%)]">
        <svg width="22" height="20" stroke="#4b5560">
          <rect x="6" y="1" width="14" height="12" fill="#fff" />
          <path d="M2 4h14v13H2zM7 9v4h4V9z" fill="#f4f4f4" fillRule="evenodd" />
        </svg>
      </button>
      <button type="button" aria-label="Close" className="flex w-[63px] items-center justify-center bg-[linear-gradient(#dda294_0%,#d18474_46%,#b02a14_52%,#d0624a_100%)]">
        <svg width="20" height="18" viewBox="0 0 20 18">
          <path d="M2 2h5l3 4 3-4h5l-5 7 5 7h-5l-3-4-3 4H2l5-7z" fill="#fff" stroke="#5a4550" />
        </svg>
      </button>
    </div>
  </header>
);

const menus = ["File", "Page", "Chart", "Tools", "View", "Window", "Help"];

const MenuBar = () => (
  <nav className="flex h-[29px] items-center border-b border-[#a0a0a0] bg-[linear-gradient(#ffffff_0%,#f0f3fa_28%,#d5dcec_34%,#dfe4f3_100%)]">
    <svg width="21" height="20" viewBox="0 0 21 20" className="ml-[3px]" shapeRendering="crispEdges">
      <path d="M11.5 1.5h3v4h3v4h-3v10h-3v-3h-4v-4h4z" fill="#fff" stroke="#000" />
    </svg>
    <div className="ml-[10px] flex flex-1 gap-[15px]">
      {menus.map((name) => (
        <button key={name} type="button" className="[font-family:'Noto_Sans',sans-serif] text-[14px] leading-[20px] text-[#111]">
          {name}
        </button>
      ))}
    </div>
    <div className="flex h-full items-center gap-px">
      <button type="button" aria-label="Minimize chart" className="flex h-[27px] w-[23px] items-center justify-center border border-[#a3b3c8] bg-[#dce9f7]">
        <svg width="13" height="13"><rect x="4" y="8" width="6" height="2" fill="#5f6f82" /></svg>
      </button>
      <button type="button" aria-label="Restore chart" className="flex h-[27px] w-[23px] items-center justify-center border border-[#a3b3c8] bg-[#dce9f7]">
        <svg width="13" height="13" fill="none" stroke="#5f6f82" shapeRendering="crispEdges">
          <path d="M5.5 5V2.5h6v4h-2M5 3.5h7M2.5 6.5h6v4h-6zM2 7.5h7" />
        </svg>
      </button>
      <button type="button" aria-label="Close chart" className="flex h-[27px] w-[23px] items-center justify-center border border-[#a3b3c8] bg-[#dce9f7]">
        <svg width="13" height="13"><path d="M3.5 4l6 6M9.5 4l-6 6" stroke="#5f6f82" strokeWidth="2" /></svg>
      </button>
    </div>
  </nav>
);

const QuoteBar = () => (
  <div className={clsx("flex h-[19px] items-center bg-[#0000ff] text-white leading-[19px]", chartText)}>
    <div className="w-[37%] pl-[6px]">02/16/24</div>
    <div className="flex">
      <span className="w-[132px]">O: 4779.000</span>
      <span className="w-[85px]">4798.000</span>
      <span className="w-[23px] text-[#f00]">L:</span>
      <span className="w-[85px]">4774.000</span>
      <span>C:&nbsp;4779.000</span>
    </div>
    <div className="flex-1 pr-[6px] text-right text-[#f00]">-1.000</div>
  </div>
);

const tabs = ["Osc 5,35", "Osc 16,64", "ADX/DMI 64", "CCI 64"];

const StudyTabs = () => (
  <div className="flex h-[21px]">
    <div className="relative flex flex-1 bg-[#f0f0f0]">
      <Tool label="Previous study" className="h-[21px] w-[21px]">
        <svg width="6" height="10"><path d="M6 0v10L1 5z" /></svg>
      </Tool>
      <Tool label="Next study" className="h-[21px] w-[21px]">
        <svg width="6" height="10"><path d="M0 0v10l5-5z" /></svg>
      </Tool>
      <svg width="240" height="21" className="absolute top-0 left-[42px]" fill="#f0f0f0" stroke="#000">
        <path d="M1 0l6 20h48l3-8" />
        <path d="M119 12l3 8h61l3-8" />
        <path d="M181 0l6 20h37l7-20" />
        <path d="M55 0l6 20h55l7-20" fill="#fff" />
      </svg>
      <div className="relative flex gap-[9px] pl-[10px]">
        {tabs.map((name) => (
          <button key={name} type="button" className="[font-family:'Liberation_Sans',Arial,sans-serif] text-[11px] leading-[14px] pb-1 text-black">
            {name}
          </button>
        ))}
      </div>
    </div>
    <div className="w-[89px] border-r-2 border-b-2 border-l-2 border-[#d4d0c8] bg-black" />
  </div>
);

const Pane = ({ children }: { children: React.ReactNode }) => (
  <section className="border-t-2 border-r-2 border-b-2 border-l-2 border-t-[#696969] border-r-white border-b-white border-l-[#808080]">
    {children}
  </section>
);

const App = () => (
  <div className="flex min-h-screen flex-col bg-[#f0f0f0]">
    <TitleBar />
    <MenuBar />
    <TopToolbar />
    <main className="flex">
      <LeftToolbar />
      <div className="flex min-w-0 flex-1 flex-col gap-[2px]">
        <Pane><QuoteBar /></Pane>
        <Pane><PriceChart /></Pane>
        <Pane>
          <OscChart />
          <StudyTabs />
        </Pane>
        <Pane><TimeAxis /></Pane>
      </div>
      <RightToolbar />
    </main>
    <footer className="mt-[2px] flex h-[18px] [font-family:'Open_Sans',sans-serif] text-[14px] leading-[20px] text-[#111]">
      <div className="flex-1 pl-[2px]">For Help, press F1</div>
      <div className="w-1/4 border-t border-l border-[#a0a0a0] pl-[2px]">Page: 2 - STOXX B</div>
      <div className="w-[6px] border-t border-[#a0a0a0]" />
    </footer>
    <div className="h-[2px] border-t border-[#56677c] bg-[#c5d8ec]" />
  </div>
);

export default App;
